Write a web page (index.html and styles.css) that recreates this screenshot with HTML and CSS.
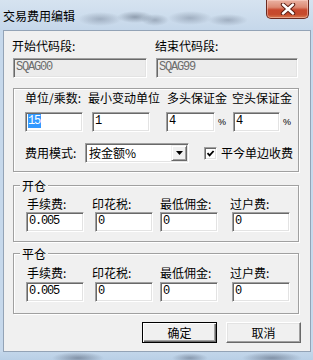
FILE: index.html
```html
<!DOCTYPE html>
<html lang="zh-CN">
<head>
<meta charset="utf-8">
<title>交易费用编辑</title>
<link rel="stylesheet" href="styles.css">
</head>
<body>
<div class="window">
  <div class="titlebar">
    <span class="title">交易费用编辑</span>
    <div class="close" aria-label="关闭">
      <svg width="16" height="12" viewBox="0 0 16 12">
        <path d="M3 1.5 L13 10.5 M13 1.5 L3 10.5" stroke="#5b1d12" stroke-width="4.4" stroke-linecap="round" fill="none"/>
        <path d="M3 1.5 L13 10.5 M13 1.5 L3 10.5" stroke="#ffffff" stroke-width="2.4" stroke-linecap="round" fill="none"/>
      </svg>
    </div>
  </div>

  <div class="client">
    <div class="codes">
      <div class="code-field cf1">
        <div class="lbl">开始代码段:</div>
        <div class="edit disabled w134">SQAG00</div>
      </div>
      <div class="code-field cf2">
        <div class="lbl">结束代码段:</div>
        <div class="edit disabled w142">SQAG99</div>
      </div>
    </div>

    <div class="group g1">
      <div class="cols">
        <div class="col ca">
          <div class="lbl">单位/乘数:</div>
          <div class="irow"><div class="edit w58 mt7"><span class="sel">15</span></div></div>
        </div>
        <div class="col cb">
          <div class="lbl">最小变动单位</div>
          <div class="irow"><div class="edit w58 mt7 ml4">1</div></div>
        </div>
        <div class="col cc">
          <div class="lbl">多头保证金</div>
          <div class="irow"><div class="edit w49 mt7 mlm1">4</div><span class="pct">%</span></div>
        </div>
        <div class="col cd">
          <div class="lbl">空头保证金</div>
          <div class="irow"><div class="edit w47 mt7 ml1">4</div><span class="pct">%</span></div>
        </div>
      </div>
      <div class="row3">
        <div class="lbl mode-lbl">费用模式:</div>
        <div class="combo">
          <span class="combo-text">按金额%</span>
          <span class="combo-btn">
            <svg width="7" height="4" viewBox="0 0 7 4"><path d="M0 0 H7 L3.5 4 Z" fill="#000"/></svg>
          </span>
        </div>
        <span class="check">
          <svg width="9" height="9" viewBox="0 0 9 9"><path d="M1.5 4.2 L3.6 6.4 L7.6 2" stroke="#000" stroke-width="1.8" fill="none"/></svg>
        </span>
        <span class="lbl check-lbl">平今单边收费</span>
      </div>
    </div>

    <div class="group g2">
      <div class="gtitle">开仓</div>
      <div class="fees">
        <div class="fcol f1"><div class="lbl l1">手续费:</div><div class="edit w58 i1">0.005</div></div>
        <div class="fcol f2"><div class="lbl">印花税:</div><div class="edit w58 i2">0</div></div>
        <div class="fcol f3"><div class="lbl">最低佣金:</div><div class="edit w58 i3">0</div></div>
        <div class="fcol f4"><div class="lbl">过户费:</div><div class="edit w58 i4">0</div></div>
      </div>
    </div>

    <div class="group g3">
      <div class="gtitle">平仓</div>
      <div class="fees">
        <div class="fcol f1"><div class="lbl l1">手续费:</div><div class="edit w58 i1">0.005</div></div>
        <div class="fcol f2"><div class="lbl">印花税:</div><div class="edit w58 i2">0</div></div>
        <div class="fcol f3"><div class="lbl">最低佣金:</div><div class="edit w58 i3">0</div></div>
        <div class="fcol f4"><div class="lbl">过户费:</div><div class="edit w58 i4">0</div></div>
      </div>
    </div>

    <div class="buttons">
      <div class="btn default">确定</div>
      <div class="btn">取消</div>
    </div>
  </div>

  <div class="bottomframe"></div>
</div>
</body>
</html>
```
FILE: styles.css
```css
* { box-sizing: border-box; }
html, body { margin: 0; padding: 0; }
body {
  width: 313px;
  height: 360px;
  overflow: hidden;
  font-family: "Noto Sans CJK SC", "Liberation Sans", sans-serif;
  font-size: 12px;
  color: #000;
  background: #c6d8eb;
}
.window {
  width: 313px;
  height: 360px;
  display: flex;
  flex-direction: column;
  background: #c6d8eb;
}

/* ---------- title bar ---------- */
.titlebar {
  height: 30px;
  flex: none;
  display: flex;
  justify-content: space-between;
  align-items: flex-start;
  padding-left: 3px;
  background:
    radial-gradient(ellipse 22px 7px at 100px 19px, rgba(80, 92, 112, 0.35), transparent),
    radial-gradient(ellipse 18px 6px at 135px 17px, rgba(70, 82, 100, 0.45), transparent),
    radial-gradient(ellipse 14px 6px at 155px 20px, rgba(70, 82, 100, 0.35), transparent),
    radial-gradient(ellipse 22px 7px at 190px 18px, rgba(80, 92, 112, 0.35), transparent),
    radial-gradient(ellipse 20px 6px at 228px 20px, rgba(80, 92, 112, 0.35), transparent),
    linear-gradient(to bottom, #d6e3f0, #c5d7ea);
}
.title {
  line-height: 14px;
  margin-top: 9px;
  white-space: nowrap;
}
.close {
  width: 43px;
  height: 19px;
  margin-right: 4px;
  border: 1px solid #6b2a20;
  border-top: none;
  border-radius: 0 0 5px 5px;
  background: linear-gradient(to bottom, #eab2a3 0%, #dc8a74 40%, #c8482e 55%, #c64a2c 80%, #d87a4f 100%);
  box-shadow: inset 0 0 0 1px rgba(255, 220, 210, 0.45);
  display: flex;
  align-items: center;
  justify-content: center;
}
.close svg { display: block; margin-top: 0; }

/* ---------- client ---------- */
.client {
  width: 308px;
  height: 322px;
  flex: none;
  margin-left: 3px;
  border: 1px solid #93a3b6;
  background: #f0f0f0;
}
.bottomframe {
  flex: 1;
  background:
    radial-gradient(ellipse 26px 6px at 78px 6px, rgba(60, 70, 90, 0.45), transparent),
    radial-gradient(ellipse 18px 5px at 190px 6px, rgba(60, 70, 90, 0.4), transparent),
    radial-gradient(ellipse 30px 6px at 272px 6px, rgba(60, 70, 90, 0.45), transparent),
    linear-gradient(to bottom, #c2d6ea, #b9cfe6);
}

.lbl {
  line-height: 14px;
  white-space: nowrap;
}

/* edit boxes */
.edit {
  height: 20px;
  border: 1px solid;
  border-color: #a0a0a0 #ffffff #ffffff #a0a0a0;
  box-shadow: inset 1px 1px 0 #696969, inset -1px -1px 0 #e3e3e3;
  background: #ffffff;
  font-family: "Liberation Mono", "DejaVu Sans Mono", monospace;
  font-size: 12px;
  letter-spacing: -1.2px;
  line-height: 16px;
  padding: 0 1px 2px 2px;
  white-space: nowrap;
  overflow: hidden;
}
.edit.disabled {
  background: #ececec;
  color: #6d6d6d;
}
.w134 { width: 134px; }
.w142 { width: 142px; }
.w58 { width: 58px; }
.w49 { width: 49px; }
.w47 { width: 47px; }
.mt7 { margin-top: 7px; }
.ml4 { margin-left: 4px; }
.ml1 { margin-left: 1px; }
.mlm1 { margin-left: -1px; }

.sel {
  display: inline-block;
  background: #3399ff;
  color: #ffffff;
  line-height: 14px;
  padding-right: 1px;
  margin-top: 1px;
  vertical-align: top;
}

/* code fields */
.codes {
  display: flex;
  padding: 8px 0 0 8px;
}
.code-field .edit {
  margin-top: 5px;
  margin-left: 1px;
}
.cf1 { width: 143px; }

/* group boxes */
.group {
  width: 286px;
  margin-left: 9px;
  border: 1px solid #a0a0a0;
  box-shadow: inset 1px 1px 0 #ffffff, 1px 1px 0 #ffffff;
}
.g1 { margin-top: 10px; height: 84px; }
.g2 { margin-top: 13px; height: 57px; }
.g3 { margin-top: 11px; height: 61px; }

.cols {
  display: flex;
  padding: 2px 0 0 11px;
}
.ca { width: 63px; }
.cb { width: 79px; }
.cc { width: 65px; }
.irow {
  display: flex;
  align-items: center;
}
.pct {
  font-family: "Liberation Sans", sans-serif;
  font-size: 9px;
  margin-left: 3px;
  margin-top: 7px;
}

.row3 {
  display: flex;
  align-items: center;
  margin: 11px 0 0 11px;
}
.mode-lbl { width: 60px; }
.combo {
  width: 104px;
  height: 20px;
  border: 1px solid;
  border-color: #a0a0a0 #ffffff #ffffff #a0a0a0;
  box-shadow: inset 1px 1px 0 #696969, inset -1px -1px 0 #e3e3e3;
  background: #ffffff;
  padding: 1px 1px 1px 3px;
  display: flex;
  align-items: center;
}
.combo-text {
  flex: 1;
  line-height: 14px;
  white-space: nowrap;
}
.combo-btn {
  width: 16px;
  height: 16px;
  background: #f0f0f0;
  border: 1px solid;
  border-color: #f0f0f0 #696969 #696969 #f0f0f0;
  box-shadow: inset 1px 1px 0 #ffffff, inset -1px -1px 0 #a0a0a0;
  display: flex;
  align-items: center;
  justify-content: center;
}
.combo-btn svg { display: block; }
.check {
  width: 13px;
  height: 13px;
  margin-left: 15px;
  border: 1px solid;
  border-color: #a0a0a0 #ffffff #ffffff #a0a0a0;
  box-shadow: inset 1px 1px 0 #696969, inset -1px -1px 0 #e3e3e3;
  background: #ffffff;
  display: flex;
  align-items: center;
  justify-content: center;
}
.check svg { display: block; }
.check-lbl { margin-left: 4px; }

/* fee groups */
.gtitle {
  width: max-content;
  margin: -7px 0 0 6px;
  padding: 0 2px;
  line-height: 14px;
  background: #f0f0f0;
}
.fees {
  display: flex;
  padding-left: 12px;
  margin-top: 4px;
}
.g3 .fees { margin-top: 5px; }
.fcol .edit { margin-top: 1px; }
.g3 .fcol .edit { margin-top: 2px; }
.f1 { width: 66px; }
.f2 { width: 68px; }
.f3 { width: 70px; }
.l1 { margin-left: 1px; }
.i2 { margin-left: 3px; }
.i4 { margin-left: 2px; }

/* buttons */
.buttons {
  display: flex;
  justify-content: flex-end;
  gap: 9px;
  margin-top: 8px;
  padding-right: 9px;
}
.btn {
  width: 75px;
  height: 21px;
  background: #f0f0f0;
  border: 1px solid;
  border-color: #ffffff #696969 #696969 #ffffff;
  box-shadow: inset -1px -1px 0 #a0a0a0, inset 1px 1px 0 #e3e3e3;
  line-height: 19px;
  text-align: center;
}
.btn.default {
  border-color: #000000;
  box-shadow: inset 1px 1px 0 #ffffff, inset -1px -1px 0 #696969, inset -2px -2px 0 #a0a0a0;
}
```
